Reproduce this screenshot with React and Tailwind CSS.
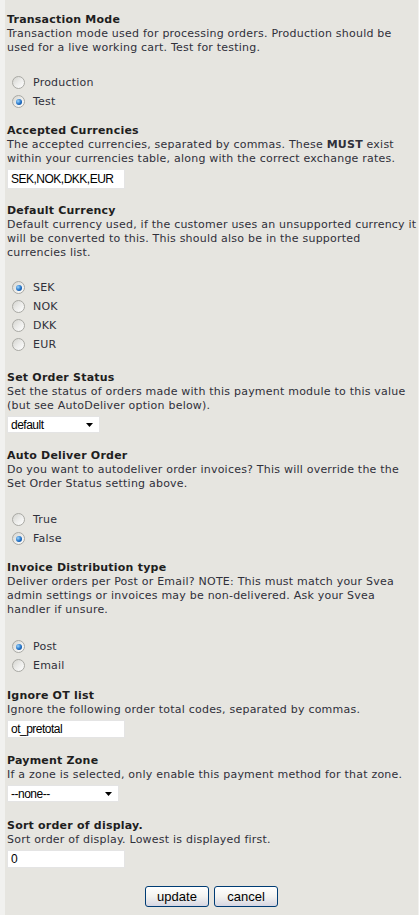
const verdana = "font-['DejaVu_Sans',Verdana,sans-serif]"
const arial = "font-['Liberation_Sans',Arial,sans-serif]"

function Radio({ checked, label }) {
  return (
    <div className="flex h-[19px] items-center">
      <span className="ml-[5px] flex h-[13px] w-[13px] items-center justify-center rounded-full border border-[#a9a9a4] bg-gradient-to-br from-[#d4d4cf] via-[#ececea] to-white">
        {checked ? <span className="h-[6px] w-[6px] rounded-full bg-[radial-gradient(circle_at_35%_35%,#9cd6ff,#1f6fc4_55%,#0b3f86)]" /> : null}
      </span>
      <span className="ml-[8px]">{label}</span>
    </div>
  )
}

function TextBox({ value, width = 'w-[118px]', height = 'h-[19px]' }) {
  return (
    <div className={`mt-[3px] flex ${height} ${width} items-center border border-[#e4e4e4] bg-white pl-[3px] text-[12px] tracking-[-0.5px] text-black ${arial}`}>
      {value}
    </div>
  )
}

function SelectBox({ value, width }) {
  return (
    <div className={`mt-[3px] flex h-[17px] ${width} items-center justify-between border border-[#e4e4e4] bg-white pl-[3px] pr-[6px] text-[12px] tracking-[-0.5px] text-black ${arial}`}>
      <span>{value}</span>
      <svg width="7" height="4" viewBox="0 0 7 4">
        <path d="M0 0h7L3.5 4z" fill="#000" />
      </svg>
    </div>
  )
}

function Heading({ children }) {
  return <div className="font-bold text-[#1e1e1e]">{children}</div>
}

export default function App() {
  return (
    <div className={`flex min-h-[915px] bg-[#f1f1ef] ${verdana} text-[11px] leading-[14px] tracking-[0.22px] text-[#30303a]`}>
      <div className="ml-[5px] mr-[1px] flex-1 whitespace-nowrap bg-[#e6e5e0] pl-[2px] pt-[13px]">
        <Heading>Transaction Mode</Heading>
        <div>
          Transaction mode used for processing orders. Production should be
          <br />
          used for a live working cart. Test for testing.
        </div>
        <div className="mt-[18px]">
          <Radio label="Production" />
          <Radio label="Test" checked />
        </div>

        <div className="mt-[13px]">
          <Heading>Accepted Currencies</Heading>
          <div>
            The accepted currencies, separated by commas. These <b>MUST</b> exist
            <br />
            within your currencies table, along with the correct exchange rates.
          </div>
          <TextBox value="SEK,NOK,DKK,EUR" height="h-[20px]" />
        </div>

        <div className="mt-[15px]">
          <Heading>Default Currency</Heading>
          <div>
            Default currency used, if the customer uses an unsupported currency it
            <br />
            will be converted to this. This should also be in the supported
            <br />
            currencies list.
          </div>
          <div className="mt-[18px]">
            <Radio label="SEK" checked />
            <Radio label="NOK" />
            <Radio label="DKK" />
            <Radio label="EUR" />
          </div>
        </div>

        <div className="mt-[17px]">
          <Heading>Set Order Status</Heading>
          <div>
            Set the status of orders made with this payment module to this value
            <br />
            (but see AutoDeliver option below).
          </div>
          <SelectBox value="default" width="w-[93px]" />
        </div>

        <div className="mt-[16px]">
          <Heading>Auto Deliver Order</Heading>
          <div>
            Do you want to autodeliver order invoices? This will override the the
            <br />
            Set Order Status setting above.
          </div>
          <div className="mt-[19px]">
            <Radio label="True" />
            <Radio label="False" checked />
          </div>
        </div>

        <div className="mt-[13px]">
          <Heading>Invoice Distribution type</Heading>
          <div>
            Deliver orders per Post or Email? NOTE: This must match your Svea
            <br />
            admin settings or invoices may be non-delivered. Ask your Svea
            <br />
            handler if unsure.
          </div>
          <div className="mt-[20px]">
            <Radio label="Post" checked />
            <Radio label="Email" />
          </div>
        </div>

        <div className="mt-[14px]">
          <Heading>Ignore OT list</Heading>
          <div>Ignore the following order total codes, separated by commas.</div>
          <TextBox value="ot_pretotal" height="h-[18px]" />
        </div>

        <div className="mt-[16px]">
          <Heading>Payment Zone</Heading>
          <div>If a zone is selected, only enable this payment method for that zone.</div>
          <SelectBox value="--none--" width="w-[112px]" />
        </div>

        <div className="mt-[17px]">
          <Heading>Sort order of display.</Heading>
          <div>Sort order of display. Lowest is displayed first.</div>
          <TextBox value="0" height="h-[18px]" />
        </div>

        <div className={`mt-[18px] flex justify-center gap-[5px] pr-[2px] ${arial} text-[13px] tracking-normal text-black`}>
          <button type="button" className="h-[21px] w-[64px] rounded-[3px] border border-[#003c74] bg-gradient-to-b from-white via-[#f3f3f0] to-[#d6d6e2] leading-none">
            update
          </button>
          <button type="button" className="h-[21px] w-[64px] rounded-[3px] border border-[#003c74] bg-gradient-to-b from-white via-[#f3f3f0] to-[#d6d6e2] leading-none">
            cancel
          </button>
        </div>
      </div>
    </div>
  )
}
